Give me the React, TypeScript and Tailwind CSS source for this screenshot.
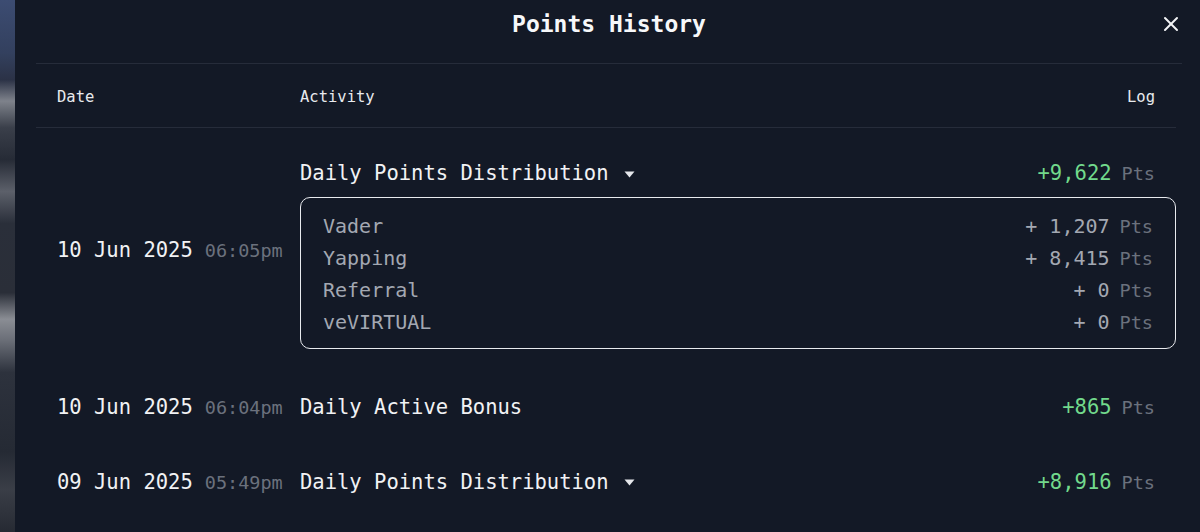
import { X } from "lucide-react";

type TBreakdown = { label: string; value: string };

type TEntry = {
  date: string;
  time: string;
  activity: string;
  amount: string;
  dropdown?: boolean;
  breakdown?: TBreakdown[];
};

const entries: TEntry[] = [
  {
    date: "10 Jun 2025",
    time: "06:05pm",
    activity: "Daily Points Distribution",
    amount: "+9,622",
    dropdown: true,
    breakdown: [
      { label: "Vader", value: "+ 1,207" },
      { label: "Yapping", value: "+ 8,415" },
      { label: "Referral", value: "+ 0" },
      { label: "veVIRTUAL", value: "+ 0" },
    ],
  },
  {
    date: "10 Jun 2025",
    time: "06:04pm",
    activity: "Daily Active Bonus",
    amount: "+865",
  },
  {
    date: "09 Jun 2025",
    time: "05:49pm",
    activity: "Daily Points Distribution",
    amount: "+8,916",
    dropdown: true,
  },
];

function Caret() {
  return (
    <svg width="11" height="7" viewBox="0 0 11 7" className="ml-[15px] mt-[2px]">
      <path d="M0.5 0.5 H10.5 L5.5 6.5 Z" fill="#e5e7eb" />
    </svg>
  );
}

function Row(props: { entry: TEntry; first: boolean }) {
  const { entry, first } = props;
  return (
    <div
      className={`flex items-center pl-[21px] ${
        first ? "pt-[31px] pb-[21px]" : "py-[23px]"
      }`}
    >
      <div
        className={`w-[243px] shrink-0 flex items-baseline ${
          entry.breakdown ? "pb-[8px]" : ""
        }`}
      >
        <span className="text-[20.5px] leading-[28px] text-[#f1f2f4]">
          {entry.date}
        </span>
        <span className="ml-[12px] text-[18.5px] text-[#6b717d]">
          {entry.time}
        </span>
      </div>
      <div className="flex-1 flex flex-col">
        <div className="flex items-center justify-between pr-[21px]">
          <div className="flex items-center">
            <span className="text-[20.5px] leading-[28px] text-[#f1f2f4]">
              {entry.activity}
            </span>
            {entry.dropdown && <Caret />}
          </div>
          <div className="flex items-baseline">
            <span className="text-[20.5px] leading-[28px] text-[#72d98c]">
              {entry.amount}
            </span>
            <span className="ml-[10px] text-[18.5px] text-[#6b717d]">Pts</span>
          </div>
        </div>
        {entry.breakdown && (
          <div className="mt-[9px] rounded-[10px] border-[1.5px] border-[#e8eaee] pl-[22px] pr-[22px] pt-[12px] pb-[10px]">
            {entry.breakdown.map((b) => (
              <div
                key={b.label}
                className="flex items-baseline justify-between h-[32px] leading-[32px]"
              >
                <span className="text-[20px] text-[#a3a8b2]">{b.label}</span>
                <div className="flex items-baseline">
                  <span className="text-[20px] text-[#a3a8b2]">{b.value}</span>
                  <span className="ml-[10px] text-[18.5px] text-[#6b717d]">
                    Pts
                  </span>
                </div>
              </div>
            ))}
          </div>
        )}
      </div>
    </div>
  );
}

export default function App() {
  return (
    <div
      className="flex w-[1200px] h-[532px] overflow-hidden bg-[#131926]"
      style={{ fontFamily: '"DejaVu Sans Mono", "Liberation Mono", monospace' }}
    >
      <div className="w-[15px] shrink-0 bg-[linear-gradient(180deg,#3c4c72_0%,#33405e_10%,#2b3246_15%,#7e828b_19%,#3a3f4a_24%,#262b36_30%,#5c606a_36%,#2a2f3a_42%,#2a2e38_55%,#8a8d94_60%,#6a6e77_64%,#2d323d_70%,#252a34_85%,#3a3e47_92%,#262a33_100%)]" />
      <div className="flex-1 flex flex-col">
        <div className="relative h-[64px] pt-[10px] flex justify-center border-b border-[#262c3a] mx-[21px] mr-[18px]">
          <h1 className="text-[23px] leading-[28px] font-bold text-[#f7f8fa]">
            Points History
          </h1>
          <button className="absolute right-[-1px] top-[12px] text-[#f3f4f6]">
            <X size={24} strokeWidth={2} />
          </button>
        </div>
        <div className="mx-[21px] mr-[24px]">
          <div className="flex items-center h-[64px] pt-[4px] pl-[21px] pr-[21px] border-b border-[#262c3a] text-[15.5px] text-[#e8eaee]">
            <span className="w-[243px]">Date</span>
            <span className="flex-1">Activity</span>
            <span>Log</span>
          </div>
          {entries.map((e, i) => (
            <Row key={i} entry={e} first={i === 0} />
          ))}
        </div>
      </div>
    </div>
  );
}
